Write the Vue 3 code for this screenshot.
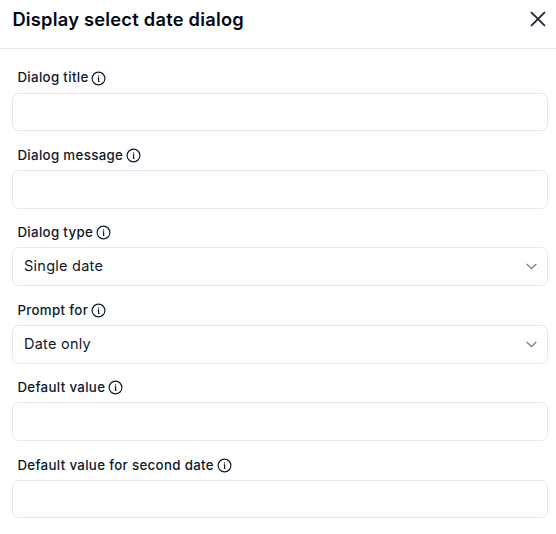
<script setup>
const fields = [
  { label: 'Dialog title' },
  { label: 'Dialog message' },
  { label: 'Dialog type', value: 'Single date' },
  { label: 'Prompt for', value: 'Date only' },
  { label: 'Default value' },
  { label: 'Default value for second date' },
]
</script>

<template>
  <section class="dialog">
    <header class="header">
      <h1>Display select date dialog</h1>
      <button class="close" aria-label="Close">
        <svg width="16" height="16" viewBox="0 0 16 16"><path d="M1.6 1.6 14.4 14.4M14.4 1.6 1.6 14.4" /></svg>
      </button>
    </header>
    <main class="form">
      <div v-for="f in fields" :key="f.label" class="field">
        <div class="label">
          <span>{{ f.label }}</span>
          <svg class="info" width="15" height="15" viewBox="0 0 15 15">
            <circle cx="7.5" cy="7.5" r="6.4" />
            <path d="M6.8 6.9h.8v3.6M6.9 10.3h1.5" />
            <circle class="dot" cx="7.5" cy="4.9" r=".7" />
          </svg>
        </div>
        <div class="control">
          <span>{{ f.value }}</span>
          <svg v-if="f.value" class="chevron" width="12" height="8" viewBox="0 0 12 8"><path d="M1.6 1.9 6.5 6.6 11.4 1.9" /></svg>
        </div>
      </div>
    </main>
  </section>
</template>

<style>
body { background: #fff; }
</style>

<style scoped>
.dialog { height: 534px; box-sizing: border-box; font-family: Inter, sans-serif; color: #0f172a; overflow: hidden; }
.header { display: flex; justify-content: space-between; box-sizing: border-box; height: 49px; padding: 8px 10px 0 12.4px; border-bottom: 1px solid #e2e8f0; }
h1 { margin: 0; font-size: 18.3px; line-height: 22px; font-weight: 600; letter-spacing: .23px; color: #020817; }
.close { display: flex; align-items: center; height: 22px; padding: 0; border: 0; background: none; }
.close svg { fill: none; stroke: #252936; stroke-width: 1.9; stroke-linecap: round; }
.form { padding: 18.6px 8px 0 12px; display: grid; grid-auto-rows: 77.4px; }
.label { display: flex; align-items: center; gap: 3px; height: 20px; padding-left: 5.4px; margin-bottom: 5px; font-size: 13.3px; font-weight: 500; letter-spacing: .33px; }
.field:first-child .label { gap: 2.6px; }
.field:first-child .label span { margin-bottom: 1px; }
.info { margin-top: 1px; fill: none; stroke: #0f172a; stroke-width: 1.15; }
.info .dot { fill: #0f172a; stroke: none; }
.control { display: flex; align-items: center; justify-content: space-between; box-sizing: border-box; height: 38.85px; padding: 0 10px 1px 11px; border: 1px solid #e2e8f0; border-radius: 7px; font-size: 14.5px; line-height: 20px; letter-spacing: .25px; }
.chevron { fill: none; stroke: #71747b; stroke-width: 1.3; }
</style>
